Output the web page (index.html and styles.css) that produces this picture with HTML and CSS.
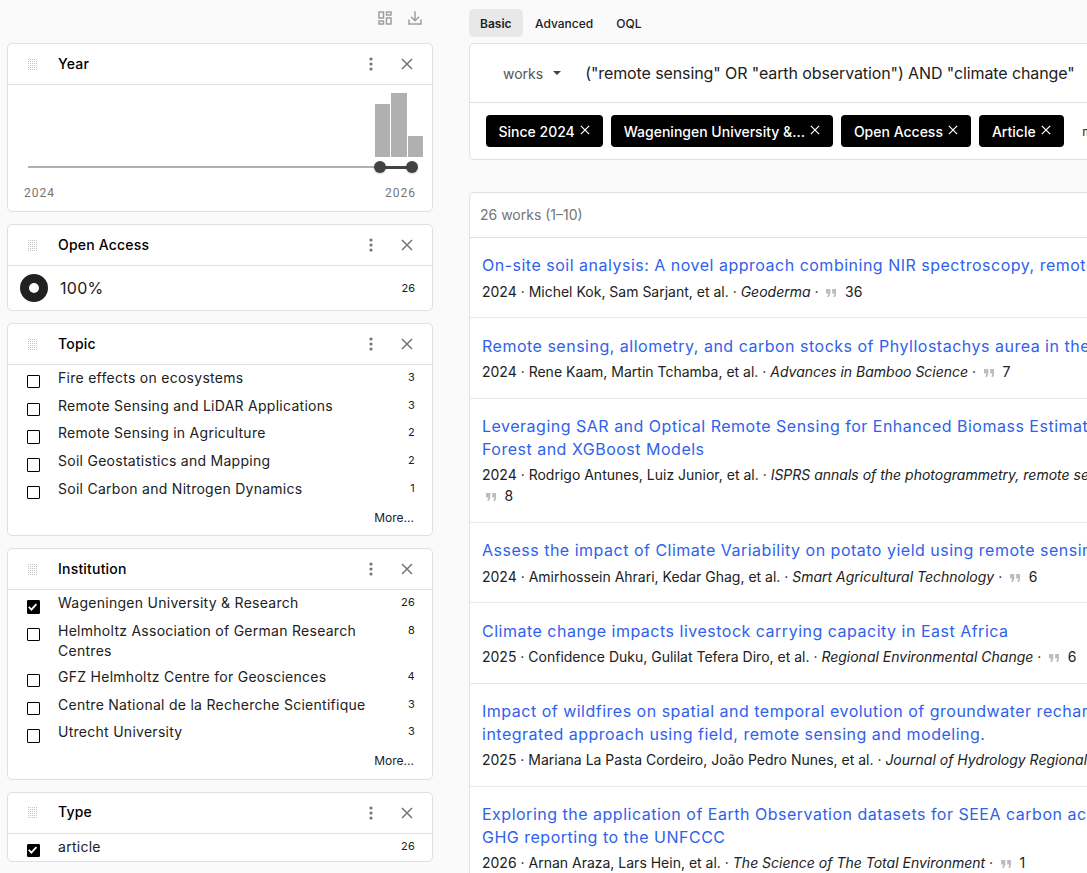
FILE: index.html
```html
<!DOCTYPE html>
<html lang="en">
<head>
    <meta charset="UTF-8">
    <title>Works search</title>
    <link rel="stylesheet" href="styles.css">
</head>
<body>
    <svg width="0" height="0" class="defs">
        <symbol id="i-drag" viewBox="0 0 9 11">
            <path d="M0 .5h9M0 2.5h9M0 4.5h9M0 6.5h9M0 8.5h9M0 10.5h9" stroke="#c4c4c4" stroke-width="1" stroke-dasharray="1 1" fill="none"/>
        </symbol>
        <symbol id="i-menu" viewBox="0 0 4 14">
            <circle cx="2" cy="2" r="1.6"/><circle cx="2" cy="7" r="1.6"/><circle cx="2" cy="12" r="1.6"/>
        </symbol>
        <symbol id="i-close" viewBox="0 0 12 12">
            <path d="M1 1l10 10M11 1L1 11" stroke="currentColor" stroke-width="1.5" fill="none"/>
        </symbol>
        <symbol id="i-check" viewBox="0 0 14 14">
            <path d="M3 7.5l2.8 2.8L11.2 4.4" stroke="#fff" stroke-width="2" fill="none"/>
        </symbol>
        <symbol id="i-quote" viewBox="0 0 12 9">
            <path d="M0 0h5v5L3.4 9H1.4l1.2-4H0zM7 0h5v5l-1.6 4H8.4l1.2-4H7z"/>
        </symbol>
    </svg>

    <div class="page">
        <aside class="sidebar">
            <div class="toolbar">
                <svg class="tool-icon" viewBox="0 0 24 24"><path d="M3 3h8v10H3zM5 5v6h4V5zM13 3h8v6h-8zM15 5v2h4V5zM13 11h8v10h-8zM15 13v6h4v-6zM3 15h8v6H3zM5 17v2h4v-2z" fill-rule="evenodd"/></svg>
                <svg class="tool-icon" viewBox="0 0 24 24"><path d="M11 3h2v10.2l3.6-3.6 1.4 1.4-6 6-6-6 1.4-1.4 3.6 3.6zM3 14h2v5h14v-5h2v7H3z"/></svg>
            </div>

            <section class="card">
                <div class="card-head">
                    <svg class="drag"><use href="#i-drag"/></svg>
                    <h2>Year</h2>
                    <svg class="menu"><use href="#i-menu"/></svg>
                    <svg class="close"><use href="#i-close"/></svg>
                </div>
                <div class="year-body">
                    <div class="bars">
                        <div class="bar" style="height: 53px"></div>
                        <div class="bar" style="height: 64px"></div>
                        <div class="bar" style="height: 21px"></div>
                    </div>
                    <div class="slider">
                        <div class="slider-range"></div>
                        <div class="slider-knob knob-from"></div>
                        <div class="slider-knob knob-to"></div>
                    </div>
                    <div class="year-labels"><span>2024</span><span>2026</span></div>
                </div>
            </section>

            <section class="card">
                <div class="card-head">
                    <svg class="drag"><use href="#i-drag"/></svg>
                    <h2>Open Access</h2>
                    <svg class="menu"><use href="#i-menu"/></svg>
                    <svg class="close"><use href="#i-close"/></svg>
                </div>
                <div class="oa-body">
                    <div class="donut"></div>
                    <div class="oa-value">100%</div>
                    <div class="count">26</div>
                </div>
            </section>

            <section class="card">
                <div class="card-head">
                    <svg class="drag"><use href="#i-drag"/></svg>
                    <h2>Topic</h2>
                    <svg class="menu"><use href="#i-menu"/></svg>
                    <svg class="close"><use href="#i-close"/></svg>
                </div>
                <div class="facet-list">
                    <div class="facet"><span class="box"></span><span class="facet-name">Fire effects on ecosystems</span><span class="count">3</span></div>
                    <div class="facet"><span class="box"></span><span class="facet-name">Remote Sensing and LiDAR Applications</span><span class="count">3</span></div>
                    <div class="facet"><span class="box"></span><span class="facet-name">Remote Sensing in Agriculture</span><span class="count">2</span></div>
                    <div class="facet"><span class="box"></span><span class="facet-name">Soil Geostatistics and Mapping</span><span class="count">2</span></div>
                    <div class="facet"><span class="box"></span><span class="facet-name">Soil Carbon and Nitrogen Dynamics</span><span class="count">1</span></div>
                </div>
                <div class="more">More...</div>
            </section>

            <section class="card">
                <div class="card-head">
                    <svg class="drag"><use href="#i-drag"/></svg>
                    <h2>Institution</h2>
                    <svg class="menu"><use href="#i-menu"/></svg>
                    <svg class="close"><use href="#i-close"/></svg>
                </div>
                <div class="facet-list">
                    <div class="facet"><span class="box checked"><svg><use href="#i-check"/></svg></span><span class="facet-name">Wageningen University &amp; Research</span><span class="count">26</span></div>
                    <div class="facet"><span class="box"></span><span class="facet-name">Helmholtz Association of German Research Centres</span><span class="count">8</span></div>
                    <div class="facet"><span class="box"></span><span class="facet-name">GFZ Helmholtz Centre for Geosciences</span><span class="count">4</span></div>
                    <div class="facet"><span class="box"></span><span class="facet-name">Centre National de la Recherche Scientifique</span><span class="count">3</span></div>
                    <div class="facet"><span class="box"></span><span class="facet-name">Utrecht University</span><span class="count">3</span></div>
                </div>
                <div class="more">More...</div>
            </section>

            <section class="card">
                <div class="card-head">
                    <svg class="drag"><use href="#i-drag"/></svg>
                    <h2>Type</h2>
                    <svg class="menu"><use href="#i-menu"/></svg>
                    <svg class="close"><use href="#i-close"/></svg>
                </div>
                <div class="facet-list">
                    <div class="facet single"><span class="box checked"><svg><use href="#i-check"/></svg></span><span class="facet-name">article</span><span class="count">26</span></div>
                </div>
            </section>
        </aside>

        <main class="main">
            <div class="tabs">
                <span class="tab active">Basic</span>
                <span class="tab">Advanced</span>
                <span class="tab">OQL</span>
            </div>

            <section class="search">
                <div class="search-row">
                    <span class="entity">works</span>
                    <span class="caret"></span>
                    <span class="query">("remote sensing" OR "earth observation") AND "climate change"</span>
                </div>
                <div class="chips">
                    <span class="chip">Since 2024 <svg><use href="#i-close"/></svg></span>
                    <span class="chip">Wageningen University &amp;... <svg><use href="#i-close"/></svg></span>
                    <span class="chip">Open Access <svg><use href="#i-close"/></svg></span>
                    <span class="chip">Article <svg><use href="#i-close"/></svg></span>
                    <span class="chip-more">more</span>
                </div>
            </section>

            <section class="results">
                <div class="results-head">26 works (1–10)</div>

                <article class="work">
                    <a class="work-title">On-site soil analysis: A novel approach combining NIR spectroscopy, remote sensing and deep learning</a>
                    <div class="work-meta">2024 · Michel Kok, Sam Sarjant, et al. · <i>Geoderma</i> · <span class="cited"><svg><use href="#i-quote"/></svg>36</span></div>
                </article>
                <article class="work">
                    <a class="work-title">Remote sensing, allometry, and carbon stocks of Phyllostachys aurea in the tropics</a>
                    <div class="work-meta">2024 · Rene Kaam, Martin Tchamba, et al. · <i>Advances in Bamboo Science</i> · <span class="cited"><svg><use href="#i-quote"/></svg>7</span></div>
                </article>
                <article class="work">
                    <a class="work-title">Leveraging SAR and Optical Remote Sensing for Enhanced Biomass Estimation Using Random<br>Forest and XGBoost Models</a>
                    <div class="work-meta">2024 · Rodrigo Antunes, Luiz Junior, et al. · <i>ISPRS annals of the photogrammetry, remote sensing and spatial information sciences</i> ·<br><span class="cited"><svg><use href="#i-quote"/></svg>8</span></div>
                </article>
                <article class="work">
                    <a class="work-title">Assess the impact of Climate Variability on potato yield using remote sensing</a>
                    <div class="work-meta">2024 · Amirhossein Ahrari, Kedar Ghag, et al. · <i>Smart Agricultural Technology</i> · <span class="cited"><svg><use href="#i-quote"/></svg>6</span></div>
                </article>
                <article class="work">
                    <a class="work-title">Climate change impacts livestock carrying capacity in East Africa</a>
                    <div class="work-meta">2025 · Confidence Duku, Gulilat Tefera Diro, et al. · <i>Regional Environmental Change</i> · <span class="cited"><svg><use href="#i-quote"/></svg>6</span></div>
                </article>
                <article class="work">
                    <a class="work-title">Impact of wildfires on spatial and temporal evolution of groundwater recharge: An<br>integrated approach using field, remote sensing and modeling.</a>
                    <div class="work-meta">2025 · Mariana La Pasta Cordeiro, João Pedro Nunes, et al. · <i>Journal of Hydrology Regional Studies</i> · <span class="cited"><svg><use href="#i-quote"/></svg>5</span></div>
                </article>
                <article class="work">
                    <a class="work-title">Exploring the application of Earth Observation datasets for SEEA carbon accounts and<br>GHG reporting to the UNFCCC</a>
                    <div class="work-meta">2026 · Arnan Araza, Lars Hein, et al. · <i>The Science of The Total Environment</i> · <span class="cited"><svg><use href="#i-quote"/></svg>1</span></div>
                </article>
            </section>
        </main>
    </div>
</body>
</html>
```

FILE: styles.css
```css
html, body {
    height: 100%;
    overflow: hidden;
}
body {
    margin: 0;
    background-color: #fafafa;
    font-family: Inter, "Liberation Sans", sans-serif;
    color: #212121;
}
.defs {
    position: absolute;
}
.page {
    display: grid;
    grid-template-columns: 426px 932px;
    column-gap: 36px;
    padding: 0 0 0 7px;
    width: 1401px;
}

/* sidebar */
.toolbar {
    display: flex;
    justify-content: flex-end;
    gap: 12px;
    height: 43px;
    padding: 9px 9px 0 0;
    box-sizing: border-box;
}
.tool-icon {
    width: 18px;
    height: 18px;
    fill: #9e9e9e;
}
.card {
    background-color: #fff;
    border: 1px solid #e0e0e0;
    border-radius: 5px;
    margin-bottom: 12px;
    box-sizing: border-box;
}
.card-head {
    display: flex;
    align-items: center;
    height: 41px;
    padding: 0 19px 0 20px;
    border-bottom: 1px solid #e0e0e0;
    box-sizing: border-box;
}
.card-head h2 {
    flex: 1;
    margin: -2px 0 0 21px;
    font-size: 14px;
    font-weight: 500;
    letter-spacing: 0.2px;
    color: #000;
}
.drag {
    width: 9px;
    height: 11px;
}
.menu {
    width: 4px;
    height: 14px;
    fill: #757575;
    margin-right: 28px;
}
.close {
    width: 12px;
    height: 12px;
    color: #757575;
}

/* year */
.year-body {
    padding: 8px 9px 0 16px;
    height: 126px;
    box-sizing: border-box;
}
.bars {
    display: flex;
    justify-content: flex-end;
    align-items: flex-end;
    gap: 1px;
    height: 64px;
}
.bar {
    width: 15.3px;
    background-color: #b0b0b0;
}
.slider {
    position: relative;
    height: 2px;
    margin: 9px 11px 0 4px;
    background-color: #b0b0b0;
}
.slider-range {
    position: absolute;
    right: 0;
    top: -0.5px;
    width: 32px;
    height: 3px;
    background-color: #424242;
}
.slider-knob {
    position: absolute;
    top: -5px;
    width: 12px;
    height: 12px;
    border-radius: 50%;
    background-color: #424242;
    box-shadow: 0 1px 2px rgba(0, 0, 0, 0.2);
}
.knob-from {
    right: 26px;
}
.knob-to {
    right: -6px;
}
.year-labels {
    display: flex;
    justify-content: space-between;
    margin-top: 18px;
    padding-right: 7px;
    font-family: Roboto, sans-serif;
    font-size: 12px;
    letter-spacing: 1px;
    color: #757575;
}

/* open access */
.oa-body {
    display: flex;
    align-items: center;
    height: 44px;
    padding: 0 17px 0 12px;
}
.donut {
    width: 10px;
    height: 10px;
    border: 9px solid #212121;
    border-radius: 50%;
}
.oa-value {
    flex: 1;
    margin-left: 12px;
    font-size: 16px;
    letter-spacing: 0.3px;
}
.count {
    font-size: 11px;
    color: #212121;
}

/* facet lists */
.facet-list {
    padding: 2.75px 17px 0 18.5px;
}
.facet {
    display: flex;
    min-height: 27.75px;
    padding-bottom: 6px;
    box-sizing: border-box;
    font-size: 14px;
    line-height: 20px;
    letter-spacing: 0.27px;
}
.facet.single {
    min-height: 24.25px;
    padding-bottom: 0;
}
.box {
    flex: none;
    width: 13.5px;
    height: 13.5px;
    margin: 7px 18px 0 0;
    border: 1.5px solid #000;
    border-radius: 1px;
    box-sizing: border-box;
}
.box.checked {
    background-color: #000;
}
.box.checked svg {
    display: block;
    width: 13px;
    height: 13px;
    margin: -1.25px;
}
.facet-name {
    flex: 1;
    padding-right: 36px;
}
.facet .count {
    line-height: 18px;
}
.more {
    padding: 2px 18px 8.75px 0;
    font-size: 12px;
    line-height: 18px;
    text-align: right;
}

/* search */
.tabs {
    display: flex;
    gap: 2px;
    height: 43px;
    padding-top: 9px;
    box-sizing: border-box;
}
.tab {
    height: 28px;
    padding: 0 10.5px;
    font-size: 12px;
    font-weight: 500;
    line-height: 30px;
    border-radius: 5px;
}
.tab.active {
    background-color: #e8e8e8;
    font-weight: 600;
    padding: 0 11px;
}
.search {
    height: 117px;
    background-color: #fff;
    border: 1px solid #e0e0e0;
    border-radius: 5px;
    box-sizing: border-box;
}
.search-row {
    display: flex;
    align-items: center;
    height: 59px;
    padding-left: 33px;
    border-bottom: 1px solid #e0e0e0;
    box-sizing: border-box;
}
.entity {
    font-size: 14px;
    color: #555;
}
.caret {
    margin-left: 10px;
    border-left: 4px solid transparent;
    border-right: 4px solid transparent;
    border-top: 4px solid #424242;
}
.query {
    margin-left: 24px;
    font-size: 16px;
    letter-spacing: -0.1px;
    white-space: nowrap;
}
.chips {
    display: flex;
    align-items: center;
    gap: 8px;
    padding: 12px 16px;
}
.chip {
    display: flex;
    align-items: center;
    gap: 5.5px;
    height: 32px;
    padding: 0 13px 0 12.5px;
    background-color: #000;
    border-radius: 4px;
    color: #fff;
    font-size: 14px;
    font-weight: 500;
    white-space: nowrap;
}
.chip svg {
    width: 10px;
    height: 10px;
    margin-top: -2px;
    color: #fff;
}
.chip-more {
    margin-left: 10px;
    font-size: 12px;
}

/* results */
.results {
    margin-top: 32px;
    background-color: #fff;
    border: 1px solid #e0e0e0;
    border-radius: 5px;
}
.results-head {
    height: 45px;
    padding-left: 10px;
    font-size: 14px;
    line-height: 44px;
    color: #757575;
    border-bottom: 1px solid #e0e0e0;
    box-sizing: border-box;
}
.work {
    padding: 16.4px 12px 15.6px;
    border-bottom: 1px solid #e8e8e8;
}
.work-title {
    display: block;
    font-size: 16px;
    line-height: 22.4px;
    letter-spacing: 0.5px;
    color: #2f62ea;
    white-space: nowrap;
}
.work-meta {
    margin-top: 4.1px;
    font-size: 14px;
    line-height: 21px;
}
.cited {
    display: inline-block;
    margin-left: 3.5px;
}
.cited svg {
    width: 10.5px;
    height: 8px;
    margin-right: 8.5px;
    fill: #bdbdbd;
}
```
